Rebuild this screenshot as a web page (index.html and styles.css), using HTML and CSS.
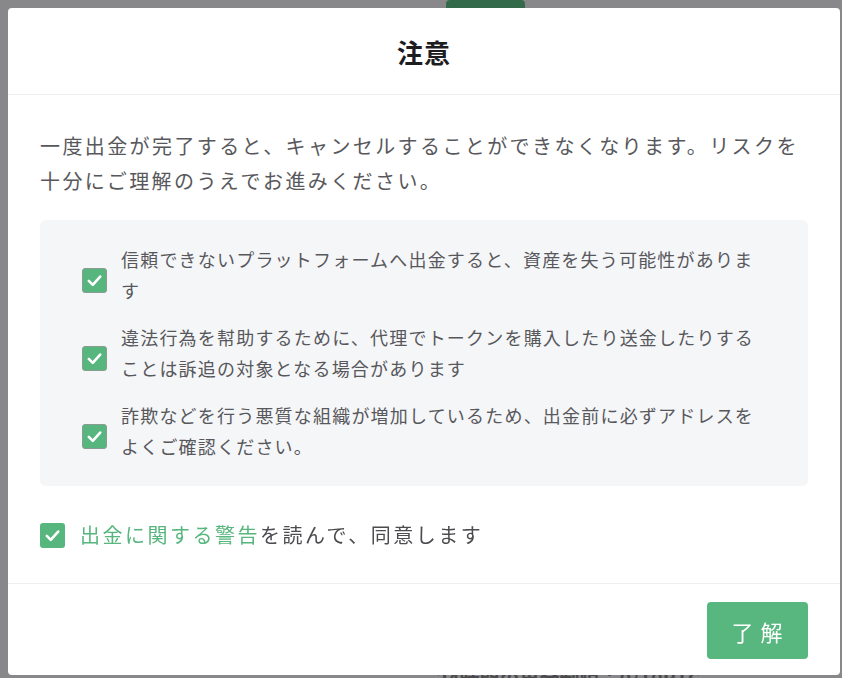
FILE: index.html
```html
<!DOCTYPE html>
<html lang="ja">
<head>
    <meta charset="UTF-8">
    <meta name="viewport" content="width=device-width, initial-scale=1.0">
    <title>注意</title>
    <link rel="stylesheet" href="styles.css">
</head>
<body>
    <div class="page">
        <div class="page-top">
            <span class="page-tab"></span>
        </div>
        <div class="page-bottom">24時間の出金制限：0/10BTC</div>
    </div>

    <div class="overlay">
        <div class="modal">
            <div class="modal-header">
                <h2>注意</h2>
            </div>

            <div class="modal-body">
                <p class="lead">一度出金が完了すると、キャンセルすることができなくなります。リスクを十分にご理解のうえでお進みください。</p>

                <ul class="risk-list">
                    <li>
                        <span class="check check-small">
                            <svg viewBox="0 0 24 24"><polyline points="5.5 12.5 10 17 18.5 7.5"/></svg>
                        </span>
                        <span class="risk-text">信頼できないプラットフォームへ出金すると、資産を失う可能性があります</span>
                    </li>
                    <li>
                        <span class="check check-small">
                            <svg viewBox="0 0 24 24"><polyline points="5.5 12.5 10 17 18.5 7.5"/></svg>
                        </span>
                        <span class="risk-text">違法行為を幇助するために、代理でトークンを購入したり送金したりすることは訴追の対象となる場合があります</span>
                    </li>
                    <li>
                        <span class="check check-small">
                            <svg viewBox="0 0 24 24"><polyline points="5.5 12.5 10 17 18.5 7.5"/></svg>
                        </span>
                        <span class="risk-text">詐欺などを行う悪質な組織が増加しているため、出金前に必ずアドレスをよくご確認ください。</span>
                    </li>
                </ul>

                <label class="agree">
                    <span class="check">
                        <svg viewBox="0 0 24 24"><polyline points="5.5 12.5 10 17 18.5 7.5"/></svg>
                    </span>
                    <span><a class="link">出金に関する警告</a>を読んで、同意します</span>
                </label>
            </div>

            <div class="modal-footer">
                <button type="button" class="btn-ok">了 解</button>
            </div>
        </div>
    </div>
</body>
</html>
```

FILE: styles.css
```css
body {
    margin: 0;
    padding: 0;
    background-color: #88888a;
    font-family: "Noto Sans CJK JP", "Noto Sans", sans-serif;
    height: 100vh;
    overflow: hidden;
}
.page {
    height: 100vh;
    display: flex;
    flex-direction: column;
    justify-content: space-between;
}
.page-top {
    display: flex;
    padding-left: 446px;
}
.page-tab {
    width: 79px;
    height: 12px;
    background-color: #336b4a;
    border-radius: 4px 4px 0 0;
}
.page-bottom {
    padding-left: 436px;
    color: #4a4a4d;
    font-size: 20px;
    font-weight: 700;
    line-height: 12px;
    height: 5px;
    overflow: hidden;
}
.overlay {
    position: fixed;
    top: 0;
    left: 0;
    right: 0;
    bottom: 0;
}
.modal {
    margin: 8px 0 0 8px;
    width: 832px;
    height: 667px;
    background: white;
    border-radius: 4px;
    display: flex;
    flex-direction: column;
}
.modal-header {
    height: 87px;
    border-bottom: 1px solid #efefef;
    box-sizing: border-box;
    display: flex;
    align-items: center;
    justify-content: center;
}
.modal-header h2 {
    margin: 0;
    font-size: 26px;
    font-weight: 700;
    color: #1d1d1f;
    letter-spacing: 1px;
    padding-top: 1px;
}
.modal-body {
    flex: 1;
    padding: 33px 32px 0;
    border-bottom: 1px solid #efefef;
}
.lead {
    margin: 0;
    padding-right: 4px;
    font-size: 20px;
    letter-spacing: 2.4px;
    line-height: 35px;
    color: #58585c;
}
.risk-list {
    list-style: none;
    margin: 22px 0 0;
    padding: 24px 46px 24px 42px;
    background-color: #f5f6f8;
    border-radius: 6px;
    display: flex;
    flex-direction: column;
    gap: 16px;
}
.risk-list li {
    display: flex;
    align-items: center;
    gap: 14px;
}
.risk-text {
    font-size: 18px;
    letter-spacing: 1.2px;
    line-height: 31px;
    color: #58585c;
}
.check {
    flex-shrink: 0;
    width: 25px;
    height: 25px;
    box-sizing: border-box;
    background-color: #56b67d;
    border-radius: 3px;
    display: flex;
    align-items: center;
    justify-content: center;
}
.check-small {
    width: 25px;
    height: 25px;
    border: 1px solid #8a9b91;
    margin-top: 10px;
}
.check svg {
    width: 21px;
    height: 21px;
    fill: none;
    stroke: white;
    stroke-width: 3;
    stroke-linecap: round;
    stroke-linejoin: round;
}
.agree {
    margin-top: 34px;
    display: flex;
    align-items: center;
    gap: 15px;
    font-size: 20px;
    letter-spacing: 2.5px;
    line-height: 30px;
    color: #4c4c50;
}
.link {
    color: #56b67d;
    text-decoration: none;
}
.modal-footer {
    height: 91px;
    padding: 18px 32px 0;
    box-sizing: border-box;
    display: flex;
    justify-content: flex-end;
    align-items: flex-start;
}
.btn-ok {
    width: 101px;
    height: 57px;
    background-color: #57b77e;
    color: white;
    border: none;
    border-radius: 4px;
    font-family: inherit;
    font-size: 22px;
    letter-spacing: 1px;
    cursor: pointer;
}
.btn-ok:hover {
    background-color: #4aa56f;
}
```
